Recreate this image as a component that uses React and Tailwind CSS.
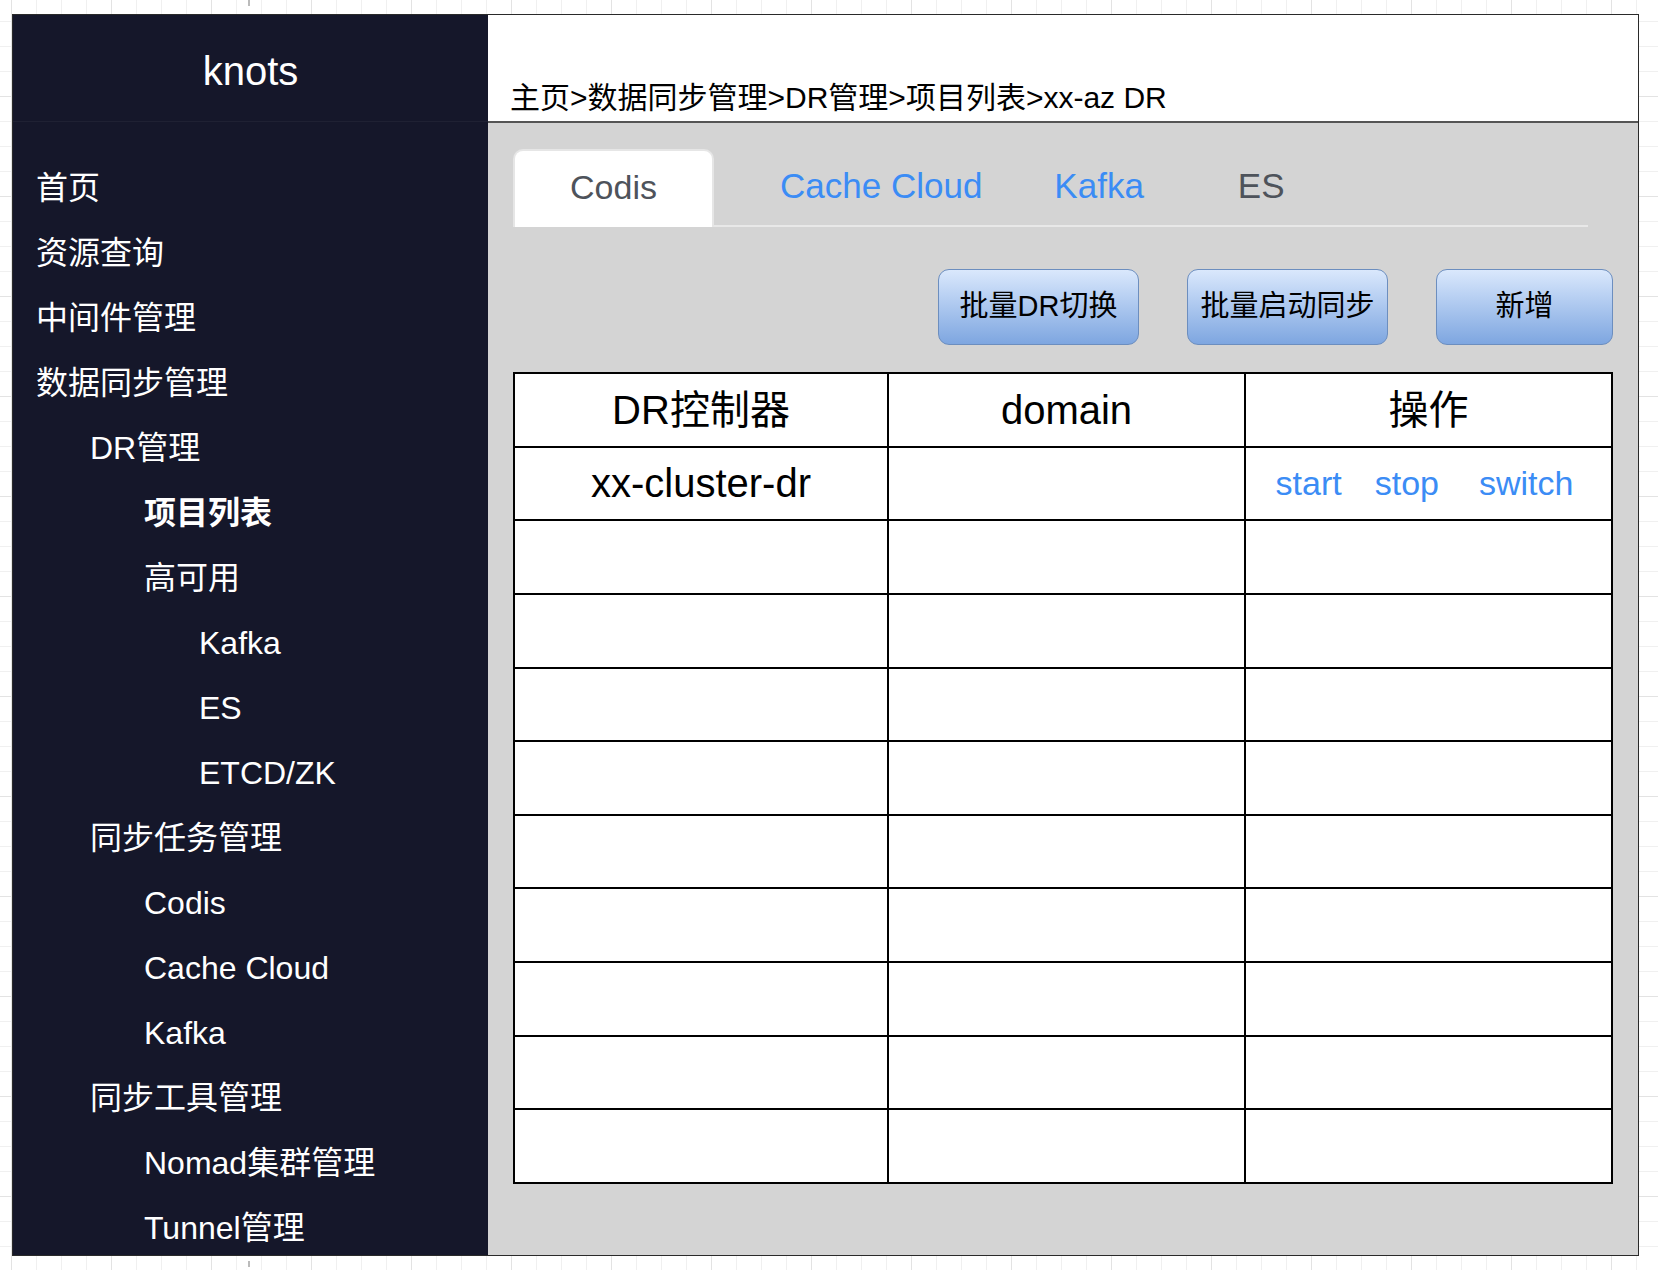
export default function App() {
  const menu = [
    { t: '首页', l: 0 },
    { t: '资源查询', l: 0 },
    { t: '中间件管理', l: 0 },
    { t: '数据同步管理', l: 0 },
    { t: 'DR管理', l: 1 },
    { t: '项目列表', l: 2, b: true },
    { t: '高可用', l: 2 },
    { t: 'Kafka', l: 3 },
    { t: 'ES', l: 3 },
    { t: 'ETCD/ZK', l: 3 },
    { t: '同步任务管理', l: 1 },
    { t: 'Codis', l: 2 },
    { t: 'Cache Cloud', l: 2 },
    { t: 'Kafka', l: 2 },
    { t: '同步工具管理', l: 1 },
    { t: 'Nomad集群管理', l: 2 },
    { t: 'Tunnel管理', l: 2 },
  ];
  const indent = ['pl-[23px]', 'pl-[77px]', 'pl-[131px]', 'pl-[186px]'];
  const bodyRows = Array.from({ length: 10 }, (_, i) => i);

  return (
    <div className="relative w-[1658px] h-[1270px] overflow-hidden bg-white pl-[12px] pt-[14px] font-['Liberation_Sans','Noto_Sans_CJK_SC',sans-serif] [background-image:linear-gradient(to_right,#e3e3e3_1px,transparent_1px),linear-gradient(to_bottom,#e3e3e3_1px,transparent_1px),linear-gradient(to_right,#f0f0f0_1px,transparent_1px),linear-gradient(to_bottom,#f0f0f0_1px,transparent_1px)] [background-size:100px_100px,100px_100px,25px_25px,25px_25px] [background-position:11px_0,0_96px,11px_0,0_21px]">
      <div className="absolute left-[248px] top-0 w-[2px] h-[6px] bg-[#bbbbbb]" />
      <div className="absolute left-[248px] top-[1261px] w-[2px] h-[6px] bg-[#bbbbbb]" />

      <div className="flex w-[1627px] h-[1242px] border border-[#2a2a2a]">
        {/* Sidebar */}
        <div className="w-[475px] h-full bg-[#15172a] text-white overflow-hidden flex flex-col">
          <div className="h-[107px] shrink-0 flex items-center justify-center pt-[6px] border-b border-[#1f2133] text-[40px] leading-none">
            knots
          </div>
          <div className="pt-[33px] flex flex-col">
            {menu.map((m, i) => (
              <div
                key={i}
                className={`h-[65px] shrink-0 flex items-center text-[32px] leading-none whitespace-nowrap ${indent[m.l]} ${m.b ? 'font-bold' : ''}`}
              >
                {m.t}
              </div>
            ))}
          </div>
        </div>

        {/* Main */}
        <div className="w-[1150px] h-full flex flex-col">
          <div className="h-[108px] shrink-0 bg-white border-b-2 border-[#555555] flex items-end pl-[22px] pb-[6px]">
            <span className="text-[30px] leading-[34px] text-black whitespace-nowrap">
              主页&gt;数据同步管理&gt;DR管理&gt;项目列表&gt;xx-az DR
            </span>
          </div>

          <div className="flex-1 bg-[#d4d4d4] px-[25px] pt-[26px]">
            {/* Tabs */}
            <div className="w-[1075px] flex items-stretch h-[78px] border-b-2 border-[#e8e8e8]">
              <div className="w-[201px] h-[78px] -mb-[2px] bg-white rounded-t-[10px] border-2 border-b-0 border-[#e6e6e6] flex items-center justify-center pb-[3px] text-[34px] text-[#4e535b]">
                Codis
              </div>
              <div className="ml-[66px] flex items-center pb-[2px] text-[35px] text-[#3b8cf5] whitespace-nowrap">Cache Cloud</div>
              <div className="ml-[72px] flex items-center pb-[2px] text-[35px] text-[#3b8cf5]">Kafka</div>
              <div className="ml-[94px] flex items-center pb-[2px] text-[35px] text-[#4e535b]">ES</div>
            </div>

            {/* Buttons */}
            <div className="mt-[42px] flex justify-end gap-[48px]">
              <button className="w-[201px] h-[76px] rounded-[11px] border-[1.5px] border-[#6c8ebf] bg-linear-to-b from-[#dae8fc] to-[#7ea6e0] text-[29px] text-black flex items-center justify-center whitespace-nowrap">
                批量DR切换
              </button>
              <button className="w-[201px] h-[76px] rounded-[11px] border-[1.5px] border-[#6c8ebf] bg-linear-to-b from-[#dae8fc] to-[#7ea6e0] text-[29px] text-black flex items-center justify-center whitespace-nowrap">
                批量启动同步
              </button>
              <button className="w-[177px] h-[76px] rounded-[11px] border-[1.5px] border-[#6c8ebf] bg-linear-to-b from-[#dae8fc] to-[#7ea6e0] text-[29px] text-black flex items-center justify-center whitespace-nowrap">
                新增
              </button>
            </div>

            {/* Table */}
            <div className="mt-[27px] w-[1100px] h-[812px] bg-black p-[2px] grid grid-cols-[372px_355px_365px] grid-rows-[repeat(11,minmax(0,1fr))] gap-[2px]">
              <div className="bg-white flex items-center justify-center text-[40px] text-black">DR控制器</div>
              <div className="bg-white flex items-center justify-center text-[40px] text-black">domain</div>
              <div className="bg-white flex items-center justify-center text-[40px] text-black">操作</div>
              {bodyRows.map((r) => (
                <div key={r} className="contents">
                  <div className="bg-white flex items-center justify-center text-[40px] text-black">
                    {r === 0 ? 'xx-cluster-dr' : ''}
                  </div>
                  <div className="bg-white" />
                  <div className="bg-white flex items-center justify-center pr-[8px] text-[34px] text-[#3b8cf5]">
                    {r === 0 ? (
                      <>
                        <span>start</span>
                        <span className="ml-[33px]">stop</span>
                        <span className="ml-[40px]">switch</span>
                      </>
                    ) : null}
                  </div>
                </div>
              ))}
            </div>
          </div>
        </div>
      </div>
    </div>
  );
}
